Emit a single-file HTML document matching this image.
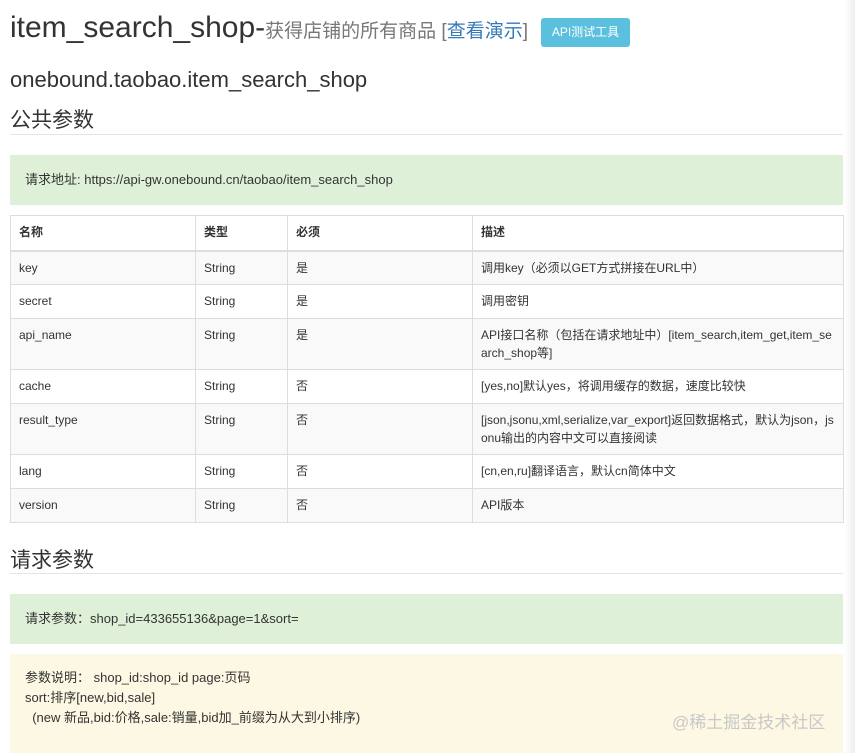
<!DOCTYPE html>
<html><head><meta charset="utf-8"><style>
body{margin:0;background:#fff;font-family:"Liberation Sans","Noto Sans CJK SC",sans-serif;color:#333;width:855px;height:753px;overflow:hidden;position:relative}
.abs{position:absolute}
h1{position:absolute;left:10px;top:8px;margin:0;font-size:30px;font-weight:normal;white-space:nowrap;line-height:40px}
h1 small{font-size:19px;color:#777}
h1 a{color:#337ab7;text-decoration:none}
.btn{position:absolute;left:541px;top:18px;width:89px;height:29px;background:#5bc0de;border-radius:3px;color:#fff;font-size:12px;line-height:29px;text-align:center}
.h2{position:absolute;left:10px;font-size:22px;white-space:nowrap}
.h3{position:absolute;left:10px;font-size:21px;white-space:nowrap}
.rule{position:absolute;left:10px;width:833px;height:1px;background:#e5e5e5}
.box{position:absolute;left:10px;width:833px;font-size:13px;box-sizing:border-box;padding-left:15px}
table{position:absolute;left:10px;top:215px;width:834px;border-collapse:collapse;font-size:12px;table-layout:fixed}
td,th{border:1px solid #ddd;padding:0 8px;text-align:left;vertical-align:top;padding-top:7px;line-height:18px;word-break:break-all}
th{font-weight:bold;height:27px;border-bottom:2px solid #ddd;box-sizing:border-box}
tr.o{background:#f9f9f9}
</style></head><body>
<h1>item_search_shop-<small>获得店铺的所有商品 [<a>查看演示</a>]</small></h1>
<div class="btn">API测试工具</div>
<div class="h2" style="top:67px">onebound.taobao.item_search_shop</div>
<div class="h3" style="top:104px">公共参数</div>
<div class="rule" style="top:134px"></div>
<div class="box" style="top:155px;height:50px;background:#dff0d8;line-height:50px">请求地址: https://api-gw.onebound.cn/taobao/item_search_shop</div>
<table>
<colgroup><col style="width:185px"><col style="width:92px"><col style="width:185px"><col></colgroup>
<tr style="height:35px"><th>名称</th><th>类型</th><th>必须</th><th>描述</th></tr>
<tr class="o" style="height:34px"><td>key</td><td>String</td><td>是</td><td>调用key（必须以GET方式拼接在URL中）</td></tr>
<tr style="height:34px"><td>secret</td><td>String</td><td>是</td><td>调用密钥</td></tr>
<tr class="o" style="height:51px"><td>api_name</td><td>String</td><td>是</td><td>API接口名称（包括在请求地址中）[item_search,item_get,item_search_shop等]</td></tr>
<tr style="height:34px"><td>cache</td><td>String</td><td>否</td><td>[yes,no]默认yes，将调用缓存的数据，速度比较快</td></tr>
<tr class="o" style="height:51px"><td>result_type</td><td>String</td><td>否</td><td>[json,jsonu,xml,serialize,var_export]返回数据格式，默认为json，jsonu输出的内容中文可以直接阅读</td></tr>
<tr style="height:34px"><td>lang</td><td>String</td><td>否</td><td>[cn,en,ru]翻译语言，默认cn简体中文</td></tr>
<tr class="o" style="height:34px"><td>version</td><td>String</td><td>否</td><td>API版本</td></tr>
</table>
<div class="h3" style="top:544px">请求参数</div>
<div class="rule" style="top:573px"></div>
<div class="box" style="top:594px;height:50px;background:#dff0d8;line-height:50px">请求参数：shop_id=433655136&amp;page=1&amp;sort=</div>
<div class="box" style="top:654px;height:99px;background:#fcf8e3;padding-top:14px;line-height:20px">参数说明： shop_id:shop_id page:页码<br>sort:排序[new,bid,sale]<br>&nbsp; (new 新品,bid:价格,sale:销量,bid加_前缀为从大到小排序)</div>
<div class="abs" style="left:672px;top:708px;font-size:17px;color:#c8c8c8">@稀土掘金技术社区</div>
<div class="abs" style="left:845px;top:0;width:10px;height:753px;background:linear-gradient(to right,#fff,#eee)"></div>
</body></html>
